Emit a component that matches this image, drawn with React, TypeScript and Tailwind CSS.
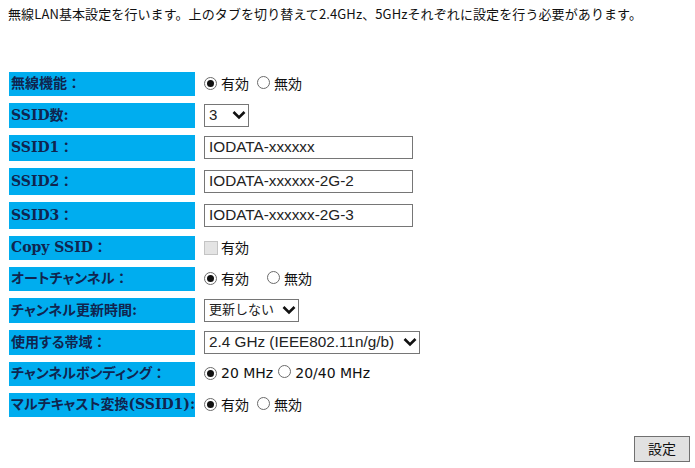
import React from "react";

const labelFont = { fontFamily: '"DejaVu Serif", "Noto Sans CJK JP", serif' };

function Chevron() {
  return (
    <svg width="14" height="10" viewBox="0 0 14 10" className="shrink-0">
      <polyline points="1.5,2 7,7.5 12.5,2" fill="none" stroke="#111" strokeWidth="2.6" />
    </svg>
  );
}

function Radio({ checked }: { checked?: boolean }) {
  return (
    <span className="inline-flex w-[13px] h-[13px] rounded-full border border-[#6b6b6b] bg-white items-center justify-center shrink-0">
      {checked && <span className="w-[7px] h-[7px] rounded-full bg-[#111]" />}
    </span>
  );
}

function Row({ label, children, h }: { label: string; children: React.ReactNode; h: string }) {
  const wide = label.endsWith("：");
  const text = wide ? label.slice(0, -1) : label;
  return (
    <div className="flex items-center">
      <div className={`w-[186px] ${h} bg-[#00adef] flex items-center pl-[2px] text-[14px] font-bold text-[#10254f] whitespace-nowrap`} style={labelFont}>
        <span className="[font-feature-settings:'palt']">{text}</span>
        {wide && <span>：</span>}
      </div>
      <div className="ml-[9px] flex items-center text-[14px] text-[#111]">{children}</div>
    </div>
  );
}

function TextBox({ value }: { value: string }) {
  return (
    <div className="w-[209px] h-[23px] border border-[#767676] bg-white flex items-center pl-[4px] text-[15.3px] text-[#222]" style={{ fontFamily: '"Liberation Sans", Arial, sans-serif' }}>
      {value}
    </div>
  );
}

function SelectBox({ value, w, size }: { value: string; w: string; size: string }) {
  return (
    <div className={`${w} h-[23px] border border-[#767676] bg-white flex items-center justify-between pl-[4px] pr-[2px] ${size} text-[#222]`} style={{ fontFamily: '"Liberation Sans", "Noto Sans CJK JP", sans-serif' }}>
      <span className="whitespace-nowrap">{value}</span>
      <Chevron />
    </div>
  );
}

function RadioPair({ a, b, gap, jpn = true }: { a: string; b: string; gap: string; jpn?: boolean }) {
  const font = jpn ? '"Noto Sans CJK JP", sans-serif' : '"DejaVu Sans", "Noto Sans CJK JP", sans-serif';
  return (
    <div className="flex items-center" style={{ fontFamily: font }}>
      <Radio checked />
      <span className="ml-[4px]">{a}</span>
      <span className={gap}>
        <Radio />
      </span>
      <span className="ml-[4px]">{b}</span>
    </div>
  );
}

export default function App() {
  return (
    <div className="w-[695px] h-[468px] bg-white relative" style={{ fontFamily: '"Noto Sans CJK JP", sans-serif' }}>
      <p className="pt-[4px] pl-[8px] text-[13px] text-[#111] tracking-[0.1px]">
        無線LAN基本設定を行います。上のタブを切り替えて2.4GHz、5GHzそれぞれに設定を行う必要があります。
      </p>

      <div className="flex flex-col gap-[7px] pl-[9px] mt-[48px]">
        <Row label="無線機能：" h="h-[24px]">
          <RadioPair a="有効" b="無効" gap="ml-[8px]" />
        </Row>
        <Row label="SSID数:" h="h-[25px]">
          <SelectBox value="3" w="w-[45px]" size="text-[15px]" />
        </Row>
        <Row label="SSID1：" h="h-[26px]">
          <TextBox value="IODATA-xxxxxx" />
        </Row>
        <Row label="SSID2：" h="h-[27px]">
          <TextBox value="IODATA-xxxxxx-2G-2" />
        </Row>
        <Row label="SSID3：" h="h-[27px]">
          <TextBox value="IODATA-xxxxxx-2G-3" />
        </Row>
        <Row label="Copy SSID：" h="h-[24px]">
          <div className="flex items-center">
            <span className="w-[14px] h-[14px] border border-[#c4c4c4] bg-[#e4e4e4] shrink-0" />
            <span className="ml-[3px]">有効</span>
          </div>
        </Row>
        <Row label="オートチャンネル：" h="h-[24px]">
          <RadioPair a="有効" b="無効" gap="ml-[18px]" />
        </Row>
        <Row label="チャンネル更新時間:" h="h-[25px]">
          <SelectBox value="更新しない" w="w-[95px]" size="text-[13px]" />
        </Row>
        <Row label="使用する帯域：" h="h-[25px]">
          <SelectBox value="2.4 GHz (IEEE802.11n/g/b)" w="w-[216px]" size="text-[15.3px]" />
        </Row>
        <Row label="チャンネルボンディング：" h="h-[24px]">
          <RadioPair a="20 MHz" b="20/40 MHz" gap="ml-[5px]" jpn={false} />
        </Row>
        <Row label="マルチキャスト変換(SSID1):" h="h-[24px]">
          <RadioPair a="有効" b="無効" gap="ml-[8px]" />
        </Row>
      </div>

      <div className="flex justify-end pr-[5px] mt-[19px]">
        <button className="w-[56px] h-[26px] border border-[#707070] bg-[#e1e1e1] text-[14px] text-[#111]">設定</button>
      </div>
    </div>
  );
}
